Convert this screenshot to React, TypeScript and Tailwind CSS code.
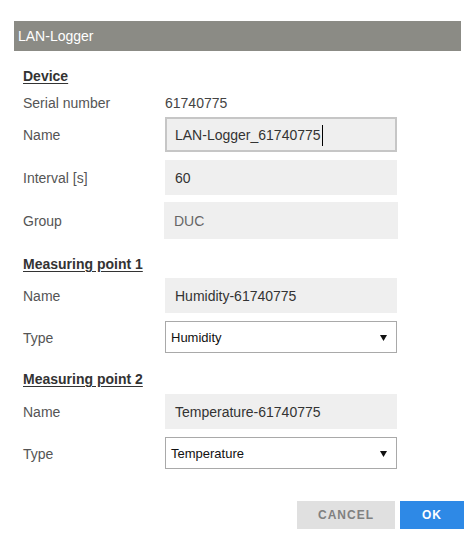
import React from 'react';

const Heading = ({ children, className = '' }: { children: React.ReactNode; className?: string }) => (
  <div className={`h-[20px] leading-[20px] text-[14px] font-bold text-[#333] underline underline-offset-[2px] ${className}`}>
    {children}
  </div>
);

const Row = ({ label, children, className = '' }: { label: string; children: React.ReactNode; className?: string }) => (
  <div className={`flex items-center ${className}`}>
    <div className="w-[142px] shrink-0 pt-[2px] text-[14px] text-[#555]">{label}</div>
    {children}
  </div>
);

const Field = ({ value }: { value: string }) => (
  <div className="flex h-[35px] w-[232px] items-center bg-[#efefef] pl-[10px] pt-[2px] text-[14px] text-[#333]">
    {value}
  </div>
);

const Select = ({ value }: { value: string }) => (
  <div className="flex h-[32px] w-[232px] items-center justify-between border border-[#a9a9a9] bg-white pl-[5px] pr-[9px] pt-[1px] text-[13px] text-[#111]">
    <span>{value}</span>
    <svg width="7" height="6" viewBox="0 0 7 6">
      <path d="M0 0 H7 L3.5 6 Z" fill="#111" />
    </svg>
  </div>
);

const App: React.FC = () => {
  return (
    <div className="min-h-[541px] bg-white pt-[21px] font-['Liberation_Sans',Arial,sans-serif]">
      <div className="mx-[14px] flex h-[30px] w-[447px] items-center bg-[#8b8b85] pl-[4px] text-[14px] text-white">
        LAN-Logger
      </div>

      <div className="pl-[23px]">
        <Heading className="mt-[15px]">Device</Heading>
        <Row label="Serial number" className="mt-[6px] h-[20px]">
          <span className="pt-[2px] text-[14px] text-[#444]">61740775</span>
        </Row>
        <Row label="Name" className="mt-[5px]">
          <div className="flex h-[35px] w-[232px] items-center border-2 border-[#c6c6c6] bg-[#efefef] pl-[8px] pt-[2px] text-[14px] text-[#333]">
            <span className="border-r border-black pr-[1px]">LAN-Logger_61740775</span>
          </div>
        </Row>
        <Row label="Interval [s]" className="mt-[8px]">
          <Field value="60" />
        </Row>
        <Row label="Group" className="mt-[7px]">
          <div className="-ml-[1px] flex h-[37px] w-[234px] items-center bg-[#efefef] pl-[10px] pt-[2px] text-[14px] text-[#666]">
            DUC
          </div>
        </Row>

        <Heading className="mt-[15px]">Measuring point 1</Heading>
        <Row label="Name" className="mt-[4px]">
          <Field value="Humidity-61740775" />
        </Row>
        <Row label="Type" className="mt-[8px]">
          <Select value="Humidity" />
        </Row>

        <Heading className="mt-[16px]">Measuring point 2</Heading>
        <Row label="Name" className="mt-[5px]">
          <Field value="Temperature-61740775" />
        </Row>
        <Row label="Type" className="mt-[8px]">
          <Select value="Temperature" />
        </Row>
      </div>

      <div className="mt-[32px] flex justify-end gap-[5px] pr-[11px]">
        <button className="h-[28px] w-[98px] bg-[#e0e0e0] text-[12px] font-bold tracking-[1px] text-[#808080]">
          CANCEL
        </button>
        <button className="h-[28px] w-[64px] bg-[#2e89e6] text-[12px] font-bold tracking-[1px] text-white">
          OK
        </button>
      </div>
    </div>
  );
};

export default App;
